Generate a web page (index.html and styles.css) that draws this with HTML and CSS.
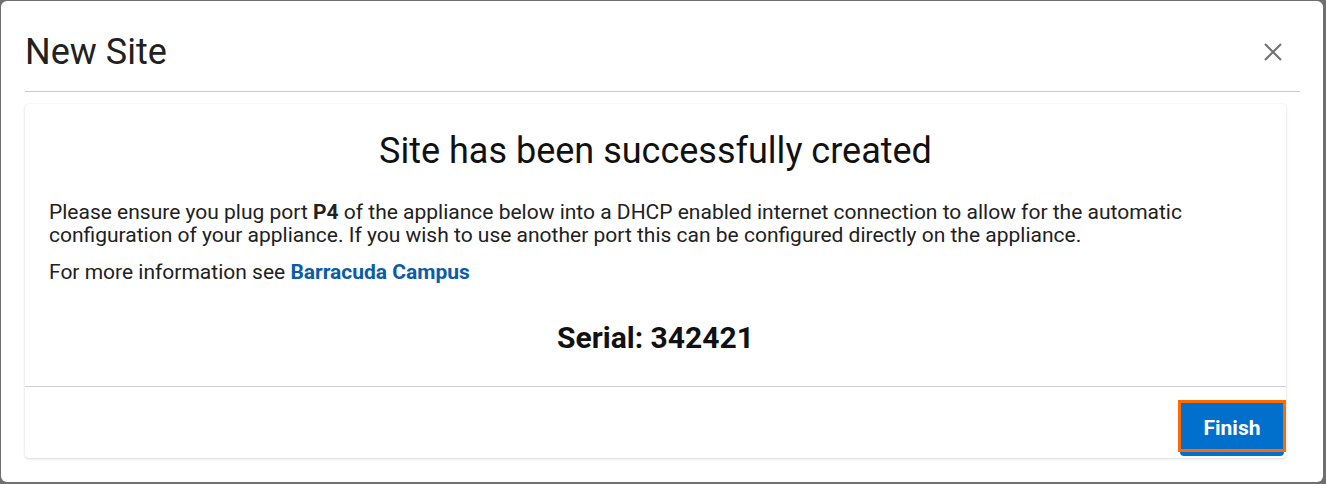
FILE: index.html
```html
<!DOCTYPE html>
<html>
<head>
<meta charset="utf-8">
<link rel="stylesheet" href="styles.css">
</head>
<body>
<div class="dialog">
  <div class="dialog-header">
    <h1 class="dialog-title">New Site</h1>
    <button class="close-btn" aria-label="Close">
      <svg width="20" height="20" viewBox="0 0 20 20"><path d="M2 2 L18 18 M18 2 L2 18" stroke="#737373" stroke-width="2.2" fill="none"/></svg>
    </button>
  </div>
  <div class="card">
    <div class="card-body">
      <h2 class="card-title">Site has been successfully created</h2>
      <p class="para">Please ensure you plug port <b>P4</b> of the appliance below into a DHCP enabled internet connection to allow for the automatic configuration of your appliance. If you wish to use another port this can be configured directly on the appliance.</p>
      <p class="para">For more information see <a class="link" href="#">Barracuda Campus</a></p>
      <div class="serial">Serial: 342421</div>
    </div>
    <div class="card-footer">
      <button class="finish-btn">Finish</button>
    </div>
  </div>
</div>
</body>
</html>
```
FILE: styles.css
```css
html, body {
  margin: 0;
  padding: 0;
}
body {
  background: #6f6f6f;
  width: 1326px;
  height: 484px;
  overflow: hidden;
  font-family: Roboto, "Liberation Sans", Arial, sans-serif;
  padding: 1px 0 0 1px;
  box-sizing: border-box;
}
.dialog {
  width: 1322px;
  height: 481px;
  background: #fff;
  border-radius: 6px;
  box-sizing: border-box;
  padding: 0 23px 0 24px;
  display: flex;
  flex-direction: column;
}
.dialog-header {
  height: 90px;
  border-bottom: 1px solid #c8c8c8;
  display: flex;
  align-items: center;
  justify-content: space-between;
}
.dialog-title {
  margin: 0;
  font-weight: 400;
  font-size: 36px;
  color: #212121;
  line-height: 1;
  padding-top: 12px;
}
.close-btn {
  background: none;
  border: 0;
  padding: 0;
  margin: 12px 17px 0 0;
  width: 20px;
  height: 20px;
  display: flex;
}
.card {
  margin-top: 12px;
  width: 1261px;
  height: 354px;
  background: #fff;
  border-radius: 4px;
  box-shadow: 0 1px 3px rgba(0,0,0,0.14), 0 0 1px rgba(0,0,0,0.08);
  display: flex;
  flex-direction: column;
}
.card-body {
  padding: 27px 24px 0 24px;
  height: 283px;
  flex: none;
  box-sizing: border-box;
  border-bottom: 1px solid #cfcfcf;
  color: #212121;
}
.card-title {
  margin: 0 0 30px;
  text-align: center;
  font-weight: 400;
  font-size: 36px;
  line-height: 40px;
  color: #111;
}
.para {
  margin: 0 0 14px;
  font-size: 21px;
  line-height: 23px;
}
.para b {
  font-weight: 700;
}
.link {
  color: #0a5ca8;
  font-weight: 700;
  text-decoration: none;
}
.serial {
  margin-top: 36px;
  text-align: center;
  font-weight: 700;
  font-size: 30px;
  line-height: 36px;
  color: #111;
}
.card-footer {
  display: flex;
  justify-content: flex-end;
  padding-top: 13px;
}
.finish-btn {
  position: relative;
  width: 108px;
  height: 52px;
  background: #0070cc;
  border: 3px solid #ff6a00;
  color: #fff;
  font-family: Roboto, "Liberation Sans", Arial, sans-serif;
  font-weight: 700;
  font-size: 21px;
  padding: 4px 0 0;
}
.finish-btn::after {
  content: "";
  position: absolute;
  left: -1px;
  right: -1px;
  bottom: -7px;
  height: 4px;
  background: #0070cc;
  border-radius: 0 0 4px 4px;
}
```
